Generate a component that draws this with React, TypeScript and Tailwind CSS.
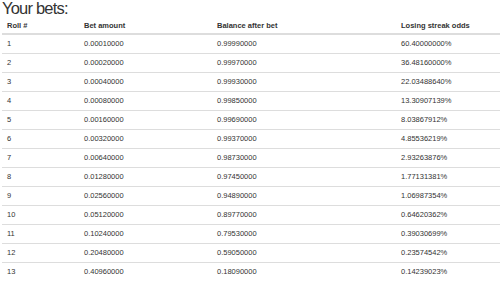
const rows: [number, string, string, string][] = [
  [1, '0.00010000', '0.99990000', '60.40000000%'],
  [2, '0.00020000', '0.99970000', '36.48160000%'],
  [3, '0.00040000', '0.99930000', '22.03488640%'],
  [4, '0.00080000', '0.99850000', '13.30907139%'],
  [5, '0.00160000', '0.99690000', '8.03867912%'],
  [6, '0.00320000', '0.99370000', '4.85536219%'],
  [7, '0.00640000', '0.98730000', '2.93263876%'],
  [8, '0.01280000', '0.97450000', '1.77131381%'],
  [9, '0.02560000', '0.94890000', '1.06987354%'],
  [10, '0.05120000', '0.89770000', '0.64620362%'],
  [11, '0.10240000', '0.79530000', '0.39030699%'],
  [12, '0.20480000', '0.59050000', '0.23574542%'],
  [13, '0.40960000', '0.18090000', '0.14239023%'],
];

export default function App() {
  return (
    <div className="w-[500px] h-[283px] overflow-hidden bg-white text-[#333] font-['Liberation_Sans',Arial,sans-serif]">
      <h3 className="pl-[2px] text-[16.5px] leading-[16px] tracking-[-0.8px] font-normal">Your bets:</h3>
      <table className="ml-[2px] w-[498px] table-fixed border-collapse text-[7.5px] leading-[9px]">
        <thead>
          <tr className="border-b-2 border-[#ddd]">
            <th className="w-[77px] h-[18px] pl-[5px] pt-[5px] text-left font-bold align-top">Roll #</th>
            <th className="w-[133px] pl-[5px] pt-[5px] text-left font-bold align-top">Bet amount</th>
            <th className="w-[184px] pl-[5px] pt-[5px] text-left font-bold align-top">Balance after bet</th>
            <th className="pl-[5px] pt-[5px] text-left font-bold align-top">Losing streak odds</th>
          </tr>
        </thead>
        <tbody>
          {rows.map((r) => (
            <tr key={r[0]} className="border-t border-[#ddd] first:border-t-0">
              <td className="h-[19px] pl-[5px] align-middle">{r[0]}</td>
              <td className="pl-[5px] align-middle">{r[1]}</td>
              <td className="pl-[5px] align-middle">{r[2]}</td>
              <td className="pl-[5px] align-middle">{r[3]}</td>
            </tr>
          ))}
        </tbody>
      </table>
    </div>
  );
}
